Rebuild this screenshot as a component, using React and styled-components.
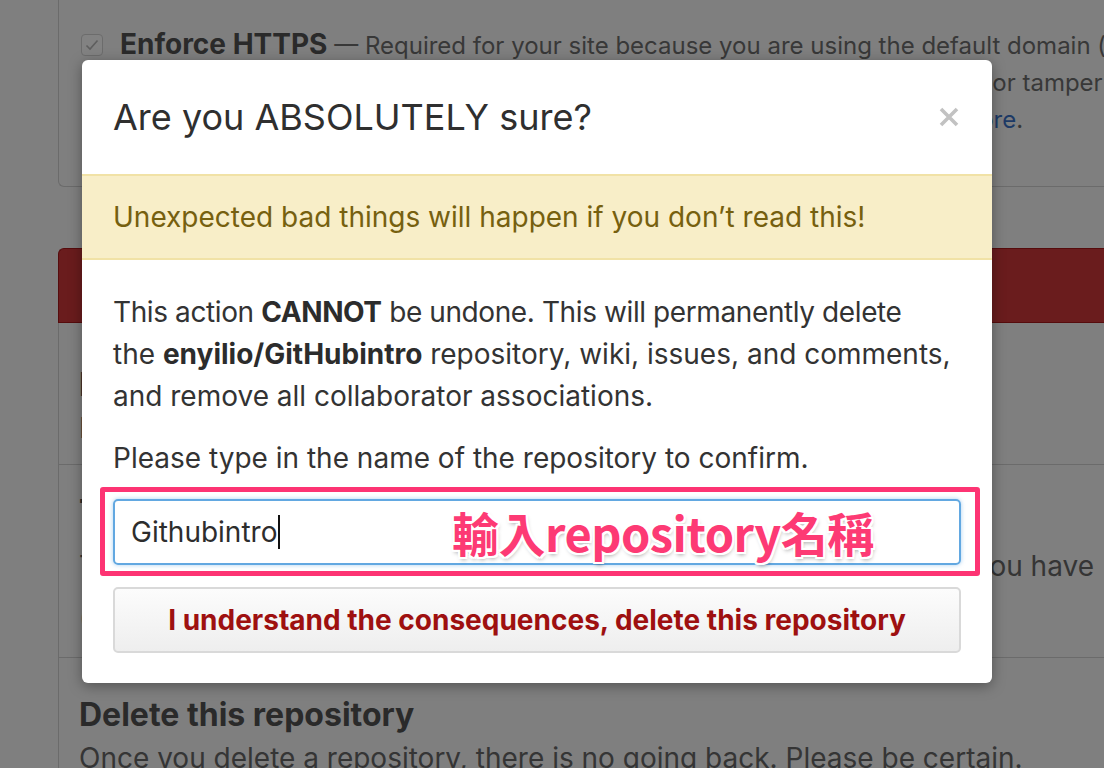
import React from 'react';
import styled, { createGlobalStyle } from 'styled-components';

const sans = `Inter, "Noto Sans", "Liberation Sans", sans-serif`;

const Global = createGlobalStyle`
  html, body { margin: 0; padding: 0; width: 1104px; height: 768px; overflow: hidden; background: #7f7f7f; }
  #root { position: relative; width: 1104px; height: 768px; overflow: hidden; }
`;

/* ---------- dimmed background page ---------- */
const Page = styled.div`
  padding-left: 58px;
  display: flex;
  flex-direction: column;
  font-family: ${sans};
  color: #2e2e2e;
`;

const PagesBox = styled.section`
  box-sizing: border-box;
  width: 1100px;
  height: 187px;
  border-left: 1px solid #6b6b6b;
  border-bottom: 1px solid #6b6b6b;
  border-bottom-left-radius: 6px;
  padding: 26px 0 0 22px;
  display: flex;
  gap: 17px;
`;

const Check = styled.div`
  flex: none;
  box-sizing: border-box;
  width: 22px;
  height: 22px;
  margin-top: 8px;
  border: 1px solid #6c6c6c;
  border-radius: 4px;
  background: #828282;
  display: flex;
  align-items: center;
  justify-content: center;
`;

const HttpsText = styled.div`
  display: flex;
  flex-direction: column;
  font-size: 24px;
  line-height: 37px;
  white-space: nowrap;
`;

const Line = styled.div`
  color: #383838;
  word-spacing: ${p => p.$ws || 0}px;
`;

const Strong = styled.b`
  font-size: 28px;
  font-weight: 700;
  color: #2a2a2a;
`;

const Link = styled.span`
  color: #1d3a66;
`;

const DangerHeader = styled.div`
  box-sizing: border-box;
  margin-top: 61px;
  width: 1100px;
  height: 75px;
  background: #6a1c1d;
  border: 1px solid #560c0d;
  border-right: none;
  border-top-left-radius: 6px;
`;

const DangerBox = styled.section`
  width: 1100px;
  border-left: 1px solid #6b6b6b;
  display: flex;
  flex-direction: column;
`;

const DangerRow = styled.div`
  box-sizing: border-box;
  height: ${p => p.$h}px;
  padding: ${p => p.$pt}px 0 0 20px;
  border-bottom: ${p => (p.$last ? 'none' : '1px solid #6b6b6b')};
  display: flex;
  flex-direction: column;
  white-space: nowrap;
`;

const RowTitle = styled.div`
  font-size: 32px;
  font-weight: 700;
  color: #2a2a2a;
  line-height: 44px;
`;

const RowText = styled.div`
  margin-top: ${p => p.$mt || 0}px;
  font-size: 28px;
  line-height: 42px;
  color: #353535;
`;

/* ---------- modal ---------- */
const Modal = styled.div`
  position: absolute;
  left: 82px;
  top: 60px;
  width: 910px;
  background: #fff;
  border-radius: 6px;
  box-shadow: 0 3px 14px rgba(0, 0, 0, 0.35);
  font-family: ${sans};
  color: #333;
  display: flex;
  flex-direction: column;
`;

const Header = styled.div`
  height: 114px;
  padding: 0 32px 0 31px;
  display: flex;
  align-items: center;
  justify-content: space-between;
`;

const Title = styled.h2`
  margin: 0;
  font-size: 36px;
  font-weight: 400;
  color: #2f2f2f;
`;

const Close = styled.button`
  border: none;
  background: none;
  padding: 0;
  width: 22px;
  height: 22px;
  display: flex;
  cursor: pointer;
`;

const Flash = styled.div`
  box-sizing: border-box;
  height: 86px;
  padding: 0 31px;
  background: #f8eec8;
  border-top: 2px solid #f1e2a6;
  border-bottom: 2px solid #f1e2a6;
  color: #76600f;
  font-size: 28px;
  display: flex;
  align-items: center;
`;

const Body = styled.div`
  padding: 31px 31px 30px;
  display: flex;
  flex-direction: column;
`;

const Para = styled.p`
  margin: 0 0 ${p => p.$mb}px;
  font-size: 28px;
  line-height: 42px;
  color: #333;
  white-space: nowrap;
  b { font-weight: 700; color: #2c2c2c; }
`;

const Tight = styled.span`
  letter-spacing: -0.4px;
`;

const FieldWrap = styled.div`
  position: relative;
  margin-top: 20px;
`;

const Frame = styled.div`
  position: absolute;
  left: -13px;
  right: -19px;
  top: -12px;
  bottom: -11px;
  border: 5px solid #fd3473;
  border-radius: 3px;
  pointer-events: none;
`;

const Field = styled.div`
  box-sizing: border-box;
  height: 66px;
  border: 2px solid #62a8e1;
  border-radius: 5px;
  box-shadow: 0 0 4px rgba(98, 168, 225, 0.55);
  padding-left: 16px;
  display: flex;
  align-items: center;
  font-size: 28px;
  color: #2d2d2d;
`;

const Caret = styled.span`
  display: inline-block;
  width: 2px;
  height: 34px;
  background: #111;
  margin-left: 1px;
`;

const Note = styled.span`
  position: absolute;
  left: 339px;
  top: 2px;
  font-family: "Noto Sans CJK TC", "Noto Sans CJK SC", sans-serif;
  font-weight: 700;
  font-size: 47px;
  line-height: 62px;
  color: #fd3a74;
  letter-spacing: -0.5px;
  text-shadow:
    2px 0 0 #fff, -2px 0 0 #fff, 0 2px 0 #fff, 0 -2px 0 #fff,
    2px 2px 0 #fff, -2px -2px 0 #fff, 2px -2px 0 #fff, -2px 2px 0 #fff,
    1px 3px 4px rgba(0, 0, 0, 0.35);
  white-space: nowrap;
`;

const DangerButton = styled.button`
  box-sizing: border-box;
  margin-top: 22px;
  height: 66px;
  width: 100%;
  border: 2px solid #d9d9d9;
  border-radius: 5px;
  background: linear-gradient(#fcfcfc, #eeeeee);
  color: #9e1010;
  font-family: ${sans};
  font-size: 28px;
  font-weight: 700;
  cursor: pointer;
`;

export default function App() {
  return (
    <>
      <Global />
      <Page>
        <PagesBox>
          <Check>
            <svg width="14" height="12" viewBox="0 0 14 12">
              <path d="M1.5 6.5 L5 10 L12.5 1.5" fill="none" stroke="#5e5e5e" strokeWidth="1.6" />
            </svg>
          </Check>
          <HttpsText>
            <Line>
              <Strong>Enforce HTTPS</Strong> — Required for your site because you are using the default domain (enyilio.github.io)
            </Line>
            <Line>HTTPS provides a layer of encryption that prevents others from snooping on or tampering with traffic to your site.</Line>
            <Line $ws={-0.45}>When HTTPS is enforced, your site will only be served over HTTPS. <Link>Learn more</Link>.</Line>
          </HttpsText>
        </PagesBox>
        <DangerHeader />
        <DangerBox>
          <DangerRow $h={142} $pt={40}>
            <RowTitle>Make this repository private</RowTitle>
            <RowText>Please upgrade your plan to make this repository private.</RowText>
          </DangerRow>
          <DangerRow $h={193} $pt={25}>
            <RowTitle>Transfer ownership</RowTitle>
            <RowText $mt={11}>Transfer this repository to another user or to an organization where you have</RowText>
            <RowText $mt={9}>(the ability to create repositories)</RowText>
          </DangerRow>
          <DangerRow $h={120} $pt={35} $last>
            <RowTitle>Delete this repository</RowTitle>
            <RowText>Once you delete a repository, there is no going back. Please be certain.</RowText>
          </DangerRow>
        </DangerBox>
      </Page>

      <Modal role="dialog" aria-label="Are you ABSOLUTELY sure?">
        <Header>
          <Title>Are you ABSOLUTELY sure?</Title>
          <Close aria-label="Close">
            <svg width="22" height="22" viewBox="0 0 22 22">
              <path d="M3 3 L19 19 M19 3 L3 19" stroke="#c2c2c2" strokeWidth="3.6" />
            </svg>
          </Close>
        </Header>
        <Flash>Unexpected bad things will happen if you don’t read this!</Flash>
        <Body>
          <Para $mb={20}>
            <Tight>This action <b>CANNOT</b> be undone. This will permanently delete</Tight>
            <br />
            the <b>enyilio/GitHubintro</b> repository, wiki, issues, and comments,
            <br />
            and remove all collaborator associations.
          </Para>
          <Para $mb={0}>Please type in the name of the repository to confirm.</Para>
          <FieldWrap>
            <Field>
              Githubintro<Caret />
            </Field>
            <Note>輸入repository名稱</Note>
            <Frame />
          </FieldWrap>
          <DangerButton>I understand the consequences, delete this repository</DangerButton>
        </Body>
      </Modal>
    </>
  );
}
